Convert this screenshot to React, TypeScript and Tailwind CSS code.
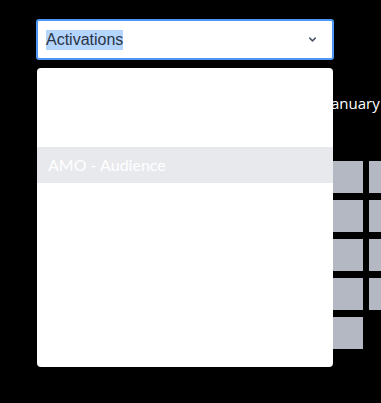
import { ChevronDown } from "lucide-react"

const months = [
  { name: "January", cells: [2, 2, 2, 2, 1] },
]

export default function App() {
  return (
    <div className="h-[403px] w-[381px] overflow-hidden bg-black pl-9 pt-[19px] font-['Lato',sans-serif]">
      {/* Select */}
      <div className="flex h-[41px] w-[298px] items-center justify-between rounded-[3px] border-2 border-[#4b97f2] bg-white pl-2 pr-[14px]">
        <span className="bg-[#b4d5fe] font-['Liberation_Sans',sans-serif] text-base leading-5 text-[#2a3444]">
          Activations
        </span>
        <ChevronDown className="h-[11px] w-[11px] text-[#4a5568]" strokeWidth={3.2} />
      </div>

      <div className="relative">
        {/* Calendar behind the menu */}
        <div className="flex w-[600px] pl-[291px] pt-[33px]">
          {months.map((m) => (
            <div key={m.name}>
              <div className="font-['Open_Sans',sans-serif] text-[15px] leading-5 text-white">{m.name}</div>
              <div className="mt-[48px] grid grid-cols-[repeat(2,32px)] gap-x-[6px] gap-y-[7px] pl-[4px]">
                {m.cells.flatMap((n, r) =>
                  [0, 1].map((c) =>
                    c < n ? (
                      <div key={`${r}-${c}`} className="h-8 w-8 bg-[#b3b8c2]" />
                    ) : (
                      <div key={`${r}-${c}`} className="h-8 w-8" />
                    )
                  )
                )}
              </div>
            </div>
          ))}
        </div>

        {/* Dropdown menu */}
        <div className="absolute left-px top-2 h-[299px] w-[296px] rounded bg-white pt-[79px]">
          <div className="flex h-9 items-center bg-[#e8e9ed] px-[11px] text-base text-white">
            AMO - Audience
          </div>
        </div>
      </div>
    </div>
  )
}
